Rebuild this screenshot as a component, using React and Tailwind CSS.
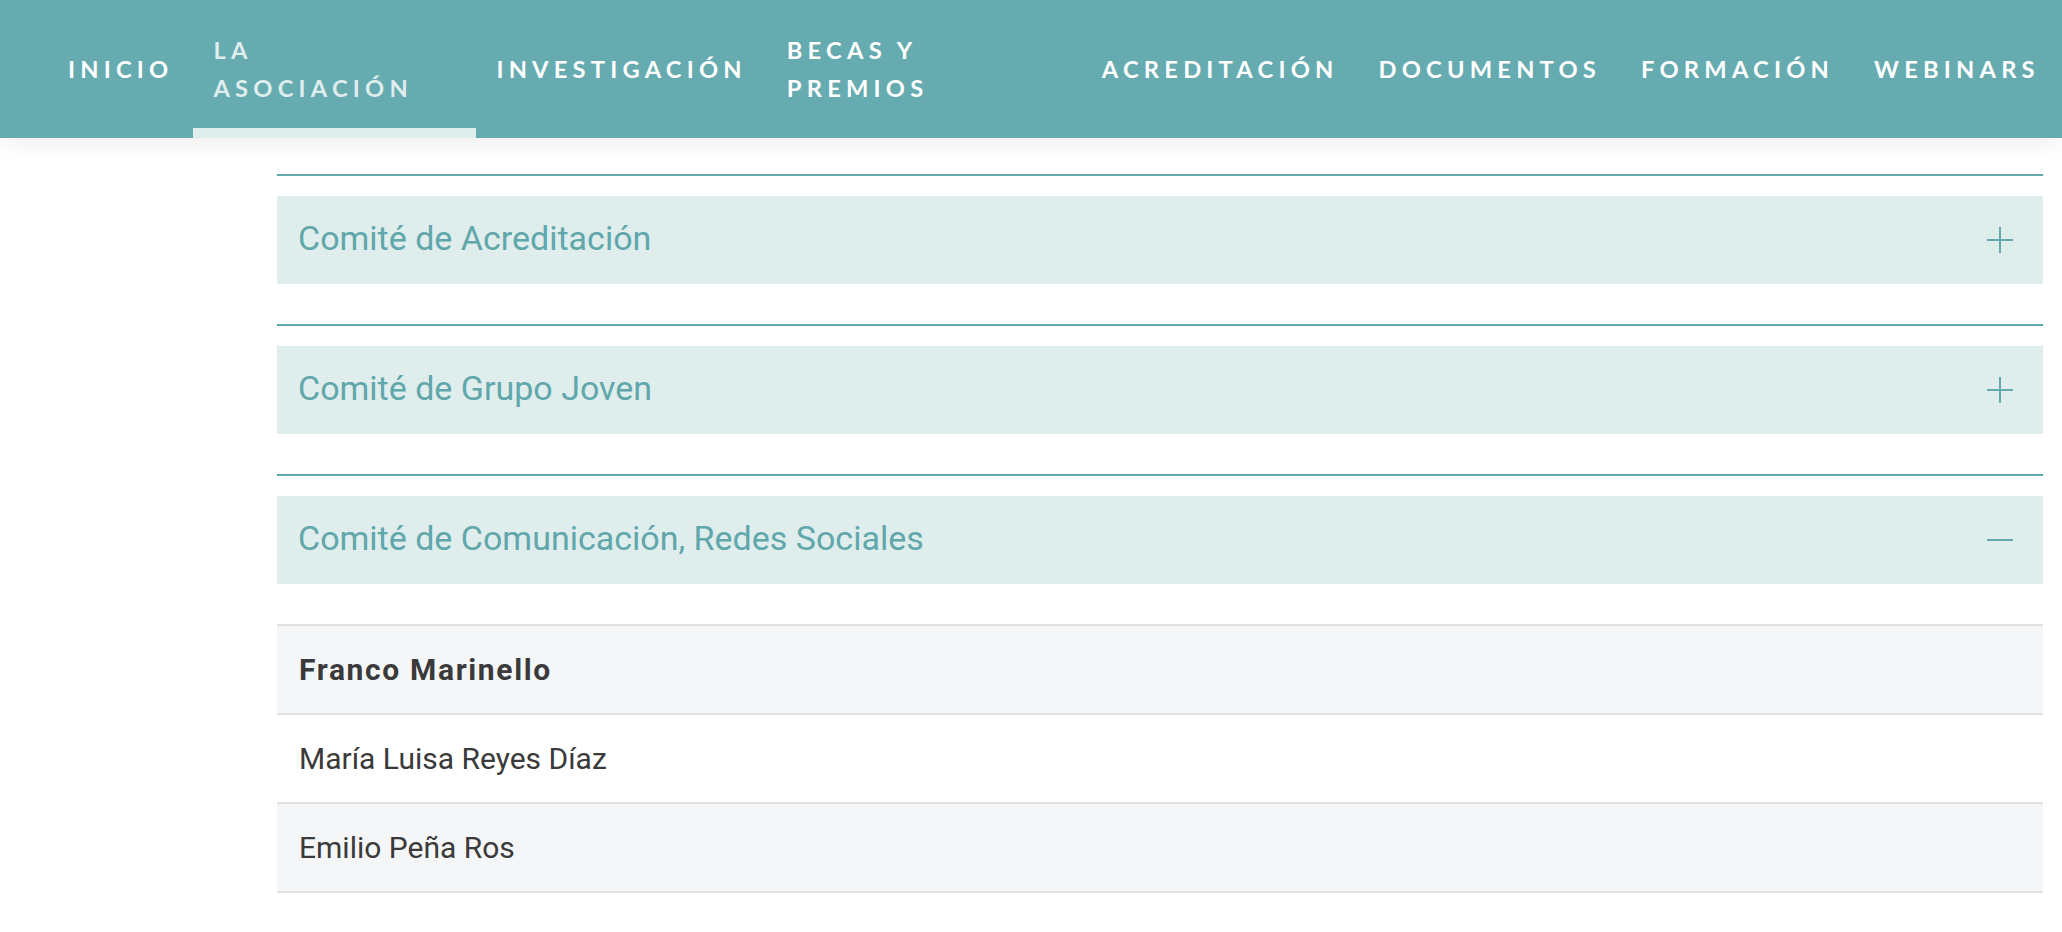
import React from 'react';

const navItems = [
  { label: ['INICIO'] },
  { label: ['LA', 'ASOCIACIÓN'], active: true, width: 'w-[283px]' },
  { label: ['INVESTIGACIÓN'] },
  { label: ['BECAS Y', 'PREMIOS'], width: 'w-[315px]' },
  { label: ['ACREDITACIÓN'] },
  { label: ['DOCUMENTOS'] },
  { label: ['FORMACIÓN'] },
  { label: ['WEBINARS'] },
];

const committees = [
  { title: 'Comité de Acreditación', open: false },
  { title: 'Comité de Grupo Joven', open: false },
  { title: 'Comité de Comunicación, Redes Sociales', open: true },
];

const members = [
  { name: 'Franco Marinello', lead: true },
  { name: 'María Luisa Reyes Díaz' },
  { name: 'Emilio Peña Ros' },
];

const PlusIcon = () => (
  <svg width="26" height="26" viewBox="0 0 26 26" fill="none">
    <rect x="0" y="12" width="26" height="2" fill="#64aaad" />
    <rect x="12" y="0" width="2" height="26" fill="#64aaad" />
  </svg>
);

const MinusIcon = () => (
  <svg width="26" height="26" viewBox="0 0 26 26" fill="none">
    <rect x="0" y="12" width="26" height="2" fill="#64aaad" />
  </svg>
);

export default function App() {
  return (
    <div className="min-h-[932px] bg-white font-['Roboto',sans-serif]">
      {/* Barra de navegación */}
      <nav className="relative z-10 flex h-[138px] items-stretch bg-[#66abb0] pl-[48px] shadow-[0_10px_22px_-4px_rgba(0,0,0,0.07)]">
        {navItems.map((item) => (
          <a
            key={item.label.join(' ')}
            href="#"
            className={`relative flex shrink-0 items-center px-5 font-['Lato',sans-serif] text-[23.7px] font-bold leading-[38.5px] tracking-[0.22em] ${
              item.width || ''
            } ${item.active ? 'text-[#dfeded]' : 'text-white'}`}
          >
            <span>
              {item.label.map((line, i) => (
                <React.Fragment key={line}>
                  {i > 0 && <br />}
                  {line}
                </React.Fragment>
              ))}
            </span>
            {item.active && (
              <span className="absolute bottom-0 left-0 h-[10px] w-full bg-[#dfeded]" />
            )}
          </a>
        ))}
      </nav>

      {/* Contenido */}
      <div className="flex pt-9">
        <aside className="w-[277px] shrink-0" />
        <main className="flex-1 pr-[19px]">
          {committees.map((c) => (
            <div key={c.title} className="mb-10 border-t-2 border-[#64aaad] pt-5">
              <div className="flex h-[88px] items-center justify-between bg-[#dfeded] pl-[21px] pr-[30px]">
                <span className="pb-[4px] text-[34px] leading-none text-[#5fa7aa]">{c.title}</span>
                {c.open ? <MinusIcon /> : <PlusIcon />}
              </div>
            </div>
          ))}

          <div className="border-t-2 border-[#e2e2e2]">
            {members.map((m, i) => (
              <div
                key={m.name}
                className={`flex h-[89px] items-center border-b-2 border-[#e2e2e2] pl-[22px] text-[30px] text-[#3a3a3a] ${
                  i % 2 === 0 ? 'bg-[#f5f6f8]' : 'bg-white'
                } ${m.lead ? 'font-bold tracking-[0.055em]' : 'font-normal'}`}
              >
                {m.name}
              </div>
            ))}
          </div>
        </main>
      </div>
    </div>
  );
}
